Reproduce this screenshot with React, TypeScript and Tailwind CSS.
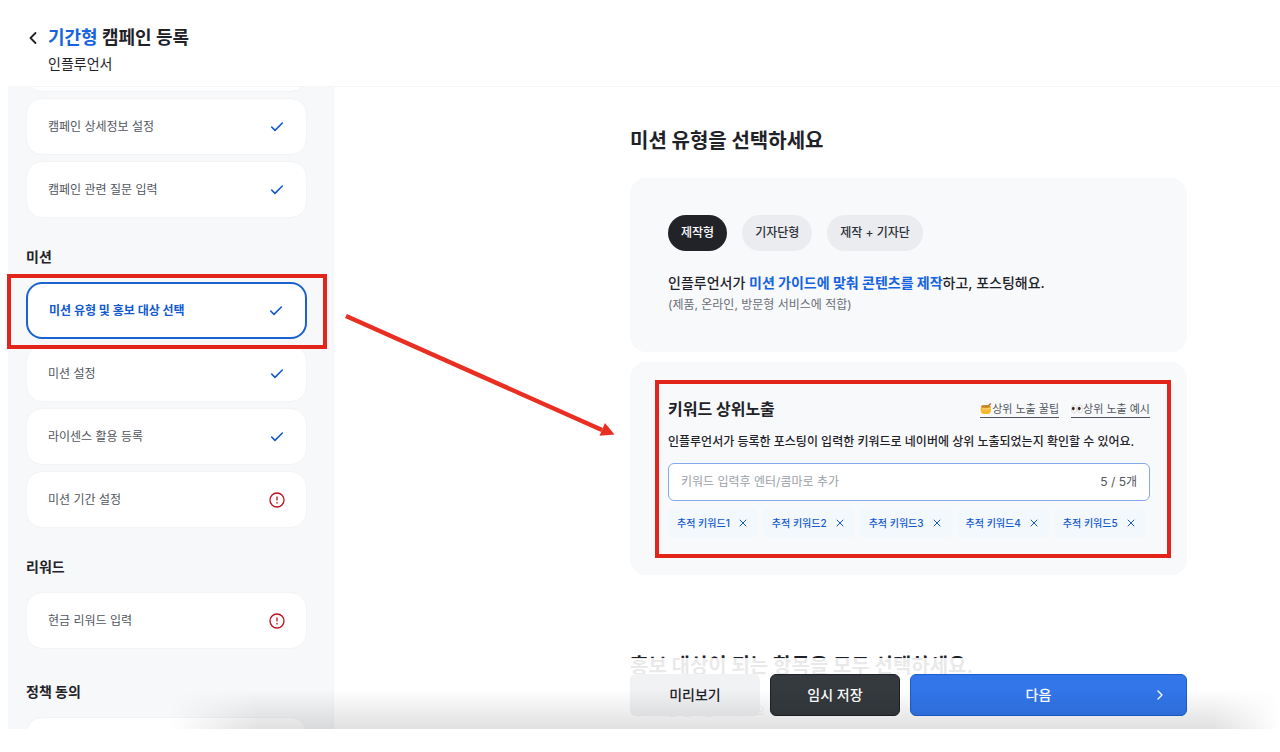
import React from "react";
import { Check, ChevronLeft, ChevronRight, X } from "lucide-react";

type Status = "done" | "alert";

const campaignSteps: { label: string; status: Status }[] = [
  { label: "캠페인 상세정보 설정", status: "done" },
  { label: "캠페인 관련 질문 입력", status: "done" },
];

const missionSteps: { label: string; status: Status; active?: boolean }[] = [
  { label: "미션 유형 및 홍보 대상 선택", status: "done", active: true },
  { label: "미션 설정", status: "done" },
  { label: "라이센스 활용 등록", status: "done" },
  { label: "미션 기간 설정", status: "alert" },
];

const missionTypes = ["제작형", "기자단형", "제작 + 기자단"];
const keywords = ["추적 키워드1", "추적 키워드2", "추적 키워드3", "추적 키워드4", "추적 키워드5"];

const AlertIcon = () => (
  <svg width="16" height="16" viewBox="0 0 16 16" fill="none" stroke="#c00d1e" strokeWidth="1.3">
    <circle cx="8" cy="8" r="7" />
    <path d="M8 4.6v4M8 10v1.4" />
  </svg>
);

const StepCard = ({ label, status, active }: { label: string; status: Status; active?: boolean }) => (
  <button
    className={`flex h-[57px] w-full shrink-0 items-center justify-between rounded-2xl bg-white text-left text-xs ${
      active
        ? "border-2 border-[#1a62d4] px-[21px] font-bold text-[#1059cf]"
        : "border border-[#f2f4f6] px-[21px] text-[#51565e]"
    }`}
  >
    <span>{label}</span>
    {status === "done" ? <Check className="size-4 text-[#1059cf]" strokeWidth={2.4} /> : <AlertIcon />}
  </button>
);

const SectionTitle = ({ children }: { children: React.ReactNode }) => (
  <h2 className="flex h-[52px] shrink-0 items-center pt-3.5 text-sm font-bold">{children}</h2>
);

const HoneyIcon = () => (
  <svg width="12" height="12" viewBox="0 0 12 12">
    <path d="M8 3 11 .5" stroke="#a8652a" strokeWidth="1.2" />
    <path d="M1.2 3.5h9.2c.8 2.2.9 4.6-.4 6.4-1 1.6-7.3 1.6-8.4 0C.3 8.1.4 5.7 1.2 3.5Z" fill="#f5b92f" />
    <ellipse cx="5.8" cy="3.4" rx="4.8" ry="1.3" fill="#c9832b" />
    <path d="M2 5.4c1 .9 2 .9 2.8.3.6.8 1.4.6 2-.1 1 .5 2 .3 3-.4" fill="none" stroke="#ffe08a" />
  </svg>
);

const EyesIcon = () => (
  <svg width="12" height="12" viewBox="0 0 12 12">
    <ellipse cx="3" cy="6" rx="2.6" ry="4" fill="#fff" stroke="#c4c4c4" strokeWidth=".6" />
    <ellipse cx="9" cy="6" rx="2.6" ry="4" fill="#fff" stroke="#c4c4c4" strokeWidth=".6" />
    <ellipse cx="2.3" cy="5.6" rx="1.4" ry="1.8" fill="#3b2622" />
    <ellipse cx="8.3" cy="5.6" rx="1.4" ry="1.8" fill="#3b2622" />
  </svg>
);

const App = () => {
  return (
    <div className="relative flex h-screen flex-col overflow-hidden bg-white pb-[23px] font-['Inter','Noto_Sans_CJK_KR',sans-serif] text-[#1f2329]">
      <header className="ml-2 flex h-[87px] shrink-0 items-start border-b border-[#f4f5f7] pt-[26px] pl-[15px]">
        <button aria-label="뒤로" className="mt-0.5">
          <ChevronLeft className="size-5" strokeWidth={2.2} />
        </button>
        <div className="ml-[5px]">
          <h1 className="text-lg/6 font-bold">
            <span className="text-[#1463e0]">기간형</span> 캠페인 등록
          </h1>
          <p className="mt-1 text-sm/5">인플루언서</p>
        </div>
      </header>

      <div className="flex min-h-0 flex-1 pl-2">
        <aside className="flex w-[326px] shrink-0 flex-col gap-1.5 overflow-hidden border-r border-[#f4f5f7] bg-[#f7f8fa] pr-[26px] pl-[18px]">
          <div className="-mt-[52px] h-[57px] shrink-0 rounded-2xl border border-[#f2f4f6] bg-white" />
          {campaignSteps.map((step) => (
            <StepCard key={step.label} {...step} />
          ))}
          <SectionTitle>미션</SectionTitle>
          {missionSteps.map((step) => (
            <StepCard key={step.label} {...step} />
          ))}
          <SectionTitle>리워드</SectionTitle>
          <StepCard label="현금 리워드 입력" status="alert" />
          <div className="mt-1 flex shrink-0 flex-col gap-1.5">
            <SectionTitle>정책 동의</SectionTitle>
            <div className="h-[57px] rounded-2xl border border-[#f2f4f6] bg-white" />
          </div>
        </aside>

        <main className="relative flex min-w-0 flex-1 flex-col items-end overflow-hidden pr-[93px]">
          <div className="w-full max-w-[557px] shrink-0 pt-[38px]">
            <h2 className="text-xl/8 font-bold">미션 유형을 선택하세요</h2>

            <section className="mt-[21px] rounded-2xl bg-[#f8f9fb] py-[37px] pr-[37px] pl-[38px]">
              <div className="flex gap-[15px]">
                {missionTypes.map((type, index) => (
                  <button
                    key={type}
                    className={`h-9 rounded-full px-[13px] text-xs font-medium ${
                      index === 0 ? "bg-[#222329] text-white" : "bg-[#ebecef] text-[#2b2f36]"
                    }`}
                  >
                    {type}
                  </button>
                ))}
              </div>
              <p className="mt-[22px] text-sm/5 font-medium">
                인플루언서가 <span className="font-bold text-[#1463e0]">미션 가이드에 맞춰 콘텐츠를 제작</span>하고, 포스팅해요.
              </p>
              <p className="mt-0.5 text-xs/5 text-[#6a6f77]">(제품, 온라인, 방문형 서비스에 적합)</p>
            </section>

            <section className="mt-2.5 rounded-2xl bg-[#f8f9fb] pt-[35px] pr-[37px] pb-[37px] pl-[38px]">
              <div className="relative">
                <div className="flex h-6 items-center justify-between">
                  <h3 className="text-base font-bold">키워드 상위노출</h3>
                  <div className="flex gap-3 text-[11px]/4 text-[#51565e]">
                    <a href="#tip" className="flex items-center border-b border-[#51565e]">
                      <HoneyIcon />
                      상위 노출 꿀팁
                    </a>
                    <a href="#example" className="flex items-center border-b border-[#51565e]">
                      <EyesIcon />
                      상위 노출 예시
                    </a>
                  </div>
                </div>
                <p className="mt-[11px] text-xs/5 font-medium">
                  인플루언서가 등록한 포스팅이 입력한 키워드로 네이버에 상위 노출되었는지 확인할 수 있어요.
                </p>
                <label className="mt-[11px] flex h-[38px] items-center rounded-md border border-[#82a9ec] bg-white px-3 text-xs">
                  <input
                    aria-label="키워드"
                    placeholder="키워드 입력후 엔터/콤마로 추가"
                    className="min-w-0 flex-1 outline-none placeholder:text-[#9a9fa8]"
                  />
                  <span className="text-[#51565e]">5 / 5개</span>
                </label>
                <div className="mt-[7px] flex gap-[5px]">
                  {keywords.map((keyword) => (
                    <span
                      key={keyword}
                      className="flex h-[30px] items-center gap-[7px] rounded-md bg-[#f3f8fd] px-[9px] text-[10px] font-medium text-[#1059cf]"
                    >
                      {keyword}
                      <button aria-label={`${keyword} 삭제`}>
                        <X className="size-3" strokeWidth={2} />
                      </button>
                    </span>
                  ))}
                </div>
                <div className="pointer-events-none absolute -top-[17px] -right-[21px] -bottom-5 -left-[13px] border-4 border-[#e3241b]" />
              </div>
            </section>

            <h2 className="mt-[75px] text-xl/8 font-bold">홍보 대상이 되는 항목을 모두 선택하세요.</h2>
            <p className="mt-5 text-xs/5 text-[#6a6f77]">여러 개를 선택할 수 있어요</p>
          </div>

          <div className="absolute inset-x-0 bottom-0 flex h-[71px] items-start justify-end bg-white/90 pt-4 pr-[93px]">
            <div className="flex w-full max-w-[557px] gap-2.5 text-sm font-medium">
              <button className="h-[42px] w-[130px] rounded-md bg-[#f1f2f4]">미리보기</button>
              <button className="h-[42px] w-[130px] rounded-md border border-[#1d2125] bg-[#353a3f] text-white">임시 저장</button>
              <button className="relative h-[42px] flex-1 rounded-md border border-[#1b5fd0] bg-[#3276ea] pr-5 text-white">
                다음
                <ChevronRight className="absolute top-3 right-[18px] size-4" />
              </button>
            </div>
          </div>
        </main>
      </div>

      {/* soft shadow along the bottom edge */}
      <div className="pointer-events-none absolute right-0 bottom-[23px] left-[170px] h-10 bg-linear-to-t from-black/12 to-transparent mask-r-from-94% mask-l-from-92%" />

      {/* highlight on the current step, with the arrow to its form */}
      <div className="pointer-events-none absolute top-[274px] left-[7px] h-[75px] w-80 border-4 border-[#e3241b]" />
      <svg className="pointer-events-none absolute top-[310px] left-[340px]" width="280" height="130" viewBox="0 0 280 130">
        <path d="M6 6 262 120" stroke="#e92f21" strokeWidth="4.5" />
        <path d="m265 113 9.5 11.5-15 1.3Z" fill="#e92f21" />
      </svg>
    </div>
  );
};

export default App;
